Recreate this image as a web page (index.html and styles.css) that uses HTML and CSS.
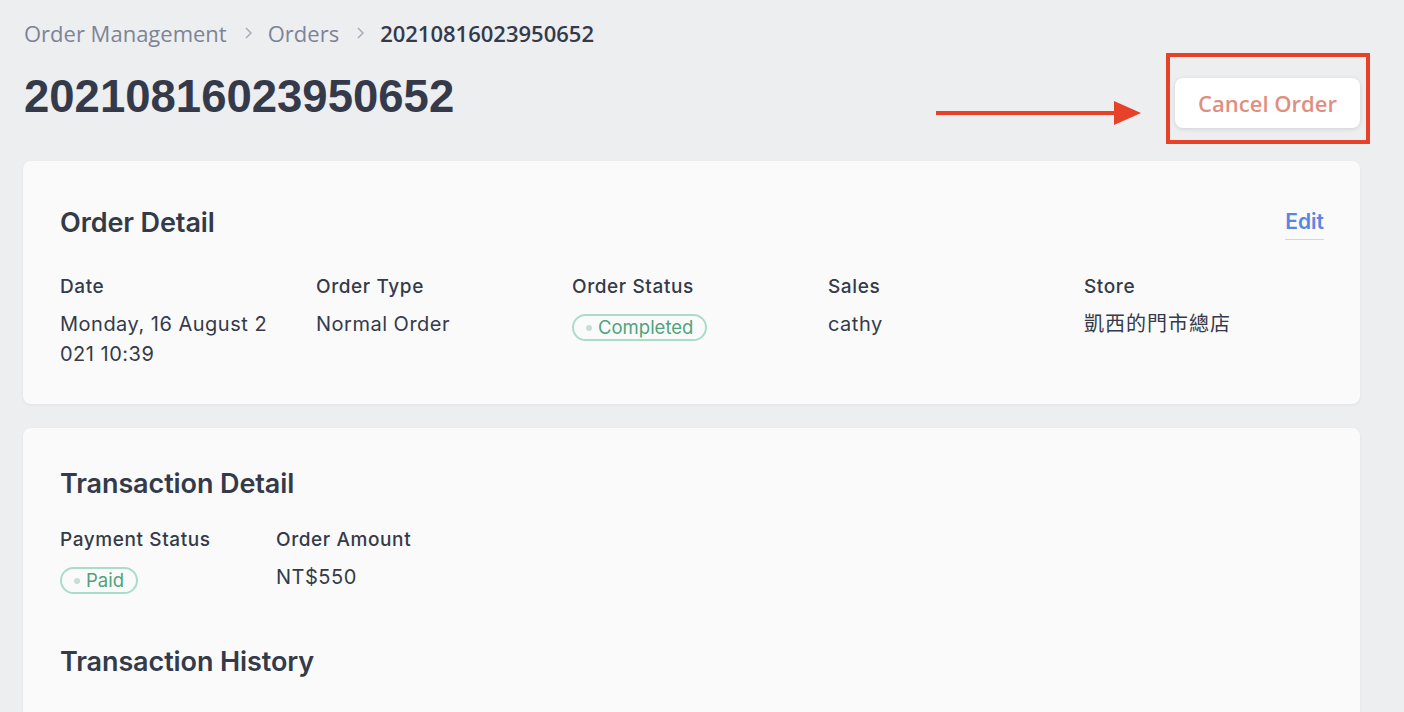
FILE: index.html
```html
<!DOCTYPE html>
<html>
<head>
<meta charset="utf-8">
<link rel="stylesheet" href="styles.css">
</head>
<body>
<div class="page">
  <nav class="breadcrumb">
    <span class="crumb">Order Management</span>
    <svg class="sep" width="10" height="14" viewBox="0 0 10 14"><path d="M2 2 L7 7 L2 12" fill="none" stroke="#a9aebb" stroke-width="1.5"/></svg>
    <span class="crumb">Orders</span>
    <svg class="sep" width="10" height="14" viewBox="0 0 10 14"><path d="M2 2 L7 7 L2 12" fill="none" stroke="#a9aebb" stroke-width="1.5"/></svg>
    <span class="crumb current">20210816023950652</span>
  </nav>

  <div class="title-row">
    <h1 class="title">20210816023950652</h1>
    <div class="action">
      <svg class="arrow" width="205" height="26" viewBox="0 0 205 26"><rect x="0" y="10" width="182" height="4" fill="#e8412a"/><polygon points="178,0 205,12 178,24" fill="#e8412a"/></svg>
      <div class="highlight"></div>
      <button class="cancel-btn">Cancel Order</button>
    </div>
  </div>

  <section class="card card-order">
    <div class="card-head">
      <h2 class="card-title">Order Detail</h2>
      <a class="edit">Edit</a>
    </div>
    <div class="fields">
      <div class="field wide">
        <div class="label">Date</div>
        <div class="value break">Monday, 16 August 2021 10:39</div>
      </div>
      <div class="field wide">
        <div class="label">Order Type</div>
        <div class="value">Normal Order</div>
      </div>
      <div class="field wide">
        <div class="label">Order Status</div>
        <div class="value"><span class="badge"><span class="dot"></span>Completed</span></div>
      </div>
      <div class="field wide">
        <div class="label">Sales</div>
        <div class="value">cathy</div>
      </div>
      <div class="field wide">
        <div class="label">Store</div>
        <div class="value cjk">凱西的門市總店</div>
      </div>
    </div>
  </section>

  <section class="card card-tx">
    <h2 class="card-title">Transaction Detail</h2>
    <div class="fields fields-tx">
      <div class="field narrow">
        <div class="label">Payment Status</div>
        <div class="value"><span class="badge"><span class="dot"></span>Paid</span></div>
      </div>
      <div class="field narrow">
        <div class="label">Order Amount</div>
        <div class="value">NT$550</div>
      </div>
    </div>
    <h2 class="card-title history">Transaction History</h2>
  </section>
</div>
</body>
</html>
```

FILE: styles.css
```css
* { box-sizing: border-box; }
html, body { margin: 0; padding: 0; }
body {
  background: #edeef0;
  font-family: Inter, "Noto Sans", sans-serif;
  color: #343a4a;
  height: 712px;
  overflow: hidden;
}
.page {
  padding: 19px 44px 0 23px;
}
.breadcrumb {
  display: flex;
  align-items: center;
  height: 28px;
  padding-left: 1px;
  font-family: "Open Sans", "Noto Sans", sans-serif;
  font-size: 22px;
  color: #7d8496;
}
.sep { margin: 0 14px 0 17px; }
.crumb.current {
  color: #343a4a;
  font-weight: 600;
}
.title-row {
  display: flex;
  justify-content: space-between;
  align-items: flex-start;
  margin-top: 24px;
}
.title {
  margin: 0;
  padding-left: 1px;
  font-family: "Liberation Sans", Arial, sans-serif;
  font-weight: 700;
  font-size: 45.5px;
  line-height: 52px;
  color: #343a4a;
}
.action {
  position: relative;
  margin-top: 7px;
}
.cancel-btn {
  display: block;
  width: 185px;
  height: 50px;
  border: none;
  border-radius: 8px;
  background: #ffffff;
  box-shadow: 0 1px 4px rgba(30, 40, 60, 0.15);
  font-family: "Open Sans", "Noto Sans", sans-serif;
  font-size: 22px;
  font-weight: 600;
  color: #df8f7e;
  cursor: pointer;
}
.highlight {
  position: absolute;
  left: -9px;
  top: -25px;
  width: 204px;
  height: 91px;
  border: 4px solid #e8412a;
}
.arrow {
  position: absolute;
  left: -239px;
  top: 23px;
}
.card {
  background: #fafafa;
  border-radius: 8px;
  box-shadow: 0 1px 3px rgba(30, 40, 60, 0.06);
  padding: 0 36px 0 37px;
}
.card-order {
  margin-top: 33px;
  padding-top: 42px;
  padding-bottom: 35px;
}
.card-tx {
  margin-top: 24px;
  padding-top: 36px;
  height: 400px;
}
.card-head {
  display: flex;
  justify-content: space-between;
  align-items: flex-start;
}
.card-title {
  margin: 0;
  font-size: 27px;
  line-height: 40px;
  font-weight: 600;
  color: #343a4a;
  letter-spacing: -0.1px;
}
.edit {
  margin-top: 2px;
  font-size: 21px;
  font-weight: 600;
  line-height: 34px;
  color: #5b86e0;
  border-bottom: 1px solid #c9d6f4;
}
.fields {
  display: flex;
  margin-top: 32px;
}
.fields-tx { margin-top: 24px; }
.field { flex-shrink: 0; }
.field.wide { width: 256px; padding-right: 38px; }
.field.narrow { width: 216px; padding-right: 20px; }
.label {
  font-size: 19px;
  line-height: 24px;
  font-weight: 500;
  letter-spacing: 0.6px;
  color: #343a4a;
}
.value {
  margin-top: 10px;
  font-size: 20px;
  line-height: 30px;
  letter-spacing: 0.5px;
  color: #343a4a;
}
.value.break { word-break: break-all; }
.value.cjk {
  font-family: Inter, "Noto Sans CJK TC", sans-serif;
  letter-spacing: 1px;
}
.badge {
  display: inline-flex;
  align-items: center;
  height: 27px;
  padding: 0 12px 0 12px;
  border: 2px solid #a9dcc9;
  border-radius: 14px;
  font-size: 18.5px;
  line-height: 23px;
  letter-spacing: 0;
  color: #4fa37b;
  vertical-align: middle;
  position: relative;
  top: 2px;
}
.dot {
  width: 6px;
  height: 6px;
  border-radius: 50%;
  background: #c6dfd4;
  margin-right: 6px;
}
.history { margin-top: 50px; }
```
